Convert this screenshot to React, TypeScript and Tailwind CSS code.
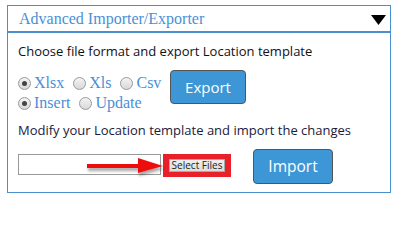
import React from "react";

function Radio({ checked }: { checked?: boolean }) {
  return (
    <span className="inline-flex items-center justify-center w-[13px] h-[13px] rounded-full border border-[#9a9a9a] bg-[linear-gradient(#f4f4f4,#d8d8d8)] shrink-0">
      {checked && <span className="w-[5px] h-[5px] rounded-full bg-[#444]" />}
    </span>
  );
}

function Opt({ label, checked }: { label: string; checked?: boolean }) {
  return (
    <span className="inline-flex items-center ml-[5px] mr-[4px]">
      <Radio checked={checked} />
      <span className="ml-[3px]">{label}</span>
    </span>
  );
}

export default function App() {
  const sans = "[font-family:'Open_Sans','Noto_Sans',sans-serif]";
  return (
    <div className="w-[402px] h-[202px] bg-white pt-[5px] pl-[7px] relative">
      <div className="w-[384px] h-[188px] border border-[#4a90d0] overflow-hidden">
        <div className="h-[27px] border-b-2 border-[#4a90d0] flex items-center justify-between pl-[11px] pr-[4px]">
          <span className="[font-family:'Liberation_Serif',serif] text-[16px] text-[#4a8fd6] leading-none mt-[1px]">
            Advanced Importer/Exporter
          </span>
          <svg width="15" height="10" viewBox="0 0 15 10" className="mt-[2px]">
            <polygon points="0,0 15,0 7.5,10" fill="#000" />
          </svg>
        </div>
        <div className={`pl-[10px] ${sans}`}>
          <div className="mt-[9px] text-[13px] leading-[18px] text-[#111]">
            Choose file format and export Location template
          </div>
          <div className="flex mt-[10px]">
            <div className="w-[157px] mt-[3px] -ml-[5px] flex flex-wrap [font-family:'Liberation_Serif',serif] text-[16px] leading-[20px] text-[#4a8fd6]">
              <Opt label="Xlsx" checked />
              <Opt label="Xls" />
              <Opt label="Csv" />
              <Opt label="Insert" checked />
              <Opt label="Update" />
            </div>
            <button className="w-[76px] h-[34px] rounded-[4px] border border-[#555] bg-[#3d96d5] text-white text-[15px] flex items-center justify-center">
              Export
            </button>
          </div>
          <div className="mt-[8px] text-[13px] leading-[18px] text-[#1a1a3a]">
            Modify your Location template and import the changes
          </div>
          <div className="flex items-start mt-[10px]">
            <div className="w-[143px] h-[21px] border border-[#999] mt-[5px] bg-white" />
            <div className="ml-[2px] mt-[5px] w-[68px] h-[23px] bg-[#e8202a] flex items-center justify-center">
              <div className="w-[56px] h-[13px] bg-[linear-gradient(#f0f0f0,#dcdcdc)] border border-[#a8a8a8] text-[10px] leading-[11px] text-[#222] flex items-center justify-center whitespace-nowrap">
                Select Files
              </div>
            </div>
            <button className="ml-[22px] w-[80px] h-[35px] rounded-[4px] border border-[#555] bg-[#3d96d5] text-white text-[15.5px] flex items-center justify-center">
              Import
            </button>
          </div>
        </div>
      </div>
      <svg className="absolute left-[84px] top-[155px]" width="82" height="26" viewBox="0 0 82 26">
        <defs>
          <filter id="sh" x="-10%" y="-30%" width="130%" height="180%">
            <feDropShadow dx="1" dy="3" stdDeviation="1.5" floodColor="#000" floodOpacity="0.35" />
          </filter>
        </defs>
        <g filter="url(#sh)">
          <rect x="3" y="9" width="55" height="4" fill="#ee1111" />
          <polygon points="54,3 79,11 54,18" fill="#ee1111" />
        </g>
      </svg>
    </div>
  );
}
